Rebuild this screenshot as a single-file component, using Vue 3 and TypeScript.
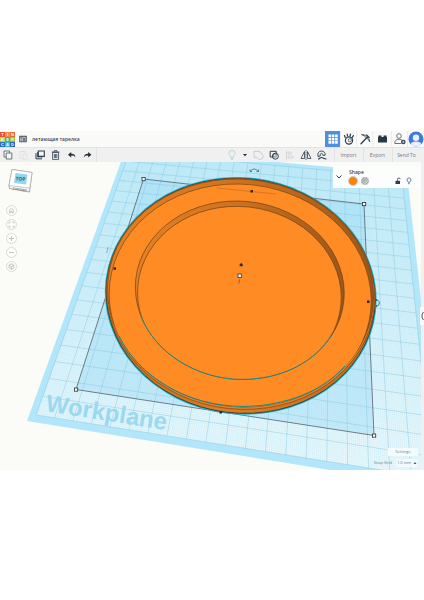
<script setup lang="ts">
import { ref } from 'vue'

type Point = [number, number]

const projectName = ref('летающая тарелка')
const snap = ref('1.0 mm')

const logoTiles = [
  { letter: 'T', color: '#e8503a' },
  { letter: 'I', color: '#f58a3c' },
  { letter: 'N', color: '#ee6a35' },
  { letter: 'K', color: '#c3d83c' },
  { letter: 'E', color: '#4fb848' },
  { letter: 'R', color: '#8dc63f' },
  { letter: 'C', color: '#2a6fbd' },
  { letter: 'A', color: '#3fb2e6' },
  { letter: 'D', color: '#2f62b0' },
]

// Corners of the workplane in scene units: far left, far right, near right, near left
const corners: Point[] = [[126, 148], [407, 174], [442, 488], [27, 421]]

// Projective map from the unit square onto the workplane
function projection(c: Point[]) {
  const [[x0, y0], [x1, y1], [x2, y2], [x3, y3]] = c
  const dx1 = x1 - x2, dx2 = x3 - x2, dx3 = x0 - x1 + x2 - x3
  const dy1 = y1 - y2, dy2 = y3 - y2, dy3 = y0 - y1 + y2 - y3
  const det = dx1 * dy2 - dx2 * dy1
  const g = (dx3 * dy2 - dx2 * dy3) / det
  const h = (dx1 * dy3 - dx3 * dy1) / det
  return (u: number, v: number): Point => {
    const w = g * u + h * v + 1
    return [
      ((x1 - x0 + g * x1) * u + (x3 - x0 + h * x3) * v + x0) / w,
      ((y1 - y0 + g * y1) * u + (y3 - y0 + h * y3) * v + y0) / w,
    ]
  }
}

const project = projection(corners)
const margin = 0.018
const at = (u: number, v: number) =>
  project(margin + u * (1 - 2 * margin), margin + v * (1 - 2 * margin))
    .map((n) => n.toFixed(1))
    .join(' ')

function gridPath(count: number) {
  let d = ''
  for (let i = 0; i <= count; i++) {
    const t = i / count
    d += `M${at(t, 0)}L${at(t, 1)}M${at(0, t)}L${at(1, t)}`
  }
  return d
}

const outerPlane = corners.map((p) => p.join(',')).join(' ')
const innerPlane = `M${at(0, 0)}L${at(1, 0)}L${at(1, 1)}L${at(0, 1)}Z`
const coarseGrid = gridPath(20)
const fineGrid = gridPath(200)
const handles: Point[] = [[143.5, 179], [364, 204], [374, 435.5], [76, 389.5]]
const footprint = handles.map((p) => p.join(',')).join(' ')
</script>

<template>
  <main class="app">
    <header class="topbar">
      <a class="logo" href="#" aria-label="Tinkercad">
        <span v-for="t in logoTiles" :key="t.letter" class="tile" :style="{ background: t.color }">{{ t.letter }}</span>
      </a>
      <button class="cell list" aria-label="Designs">
        <svg viewBox="0 0 16 16"><rect x="1.5" y="2.5" width="13" height="11" fill="#fff" stroke="#444c55" stroke-width="2" /><path d="M2 4h12M6 4v9M8 7h5M8 9h5M8 11h5M3 7h2M3 10h2" stroke="#444c55" stroke-width="1.5" /></svg>
      </button>
      <h1 class="title">{{ projectName }}</h1>
      <nav class="modes">
        <button class="cell active" aria-label="3D design">
          <svg viewBox="0 0 16 16"><path d="M3.5 3.5h2.6v2.600H3.5zM6.8 3.5h2.6v2.600H6.8zM10.1 3.5h2.6v2.6h-2.6zM3.5 6.8h2.6v2.600H3.5zM6.8 6.8h2.6v2.600H6.8zM10.1 6.8h2.6v2.6h-2.6zM3.5 10.1h2.6v2.600H3.5zM6.8 10.1h2.6v2.600H6.8zM10.1 10.1h2.6v2.6h-2.6z" fill="#fff" /></svg>
        </button>
        <button class="cell" aria-label="Sim lab">
          <svg viewBox="0 0 16 16" fill="none" stroke="#2d3d4b"><circle cx="8" cy="9.500" r="3.600" stroke-width="1.200" /><circle cx="8.800" cy="9.200" r="1.600" stroke-width=".7" /><path d="M4.200 6.500L3.500 4.500M6.500 5L6.200 3M9 5l.5-2M11.200 6.400l1.200-1.800" stroke-width="1.200" stroke-linecap="round" /></svg>
        </button>
        <button class="cell" aria-label="Blocks">
          <svg viewBox="0 0 16 16" fill="none" stroke="#2d3d4b" stroke-linecap="round"><path d="M4 12.800L10.400 6" stroke-width="1.300" /><path d="M5 3.700c3-.4 7 1.800 7.800 7.200c-1-2-2.200-3.300-3.700-4.600C7.700 5 6.500 4.300 5 3.700z" stroke-width=".8" /><path d="M9.500 3.800l2.700 2.700" stroke-width="1.200" /></svg>
        </button>
        <button class="cell wide" aria-label="Bricks">
          <svg viewBox="0 0 16 16" fill="#263746"><path d="M4 6V4.500h3V6h2V4.500h3V6h.5v5.500h-9V6z" /></svg>
        </button>
        <button class="cell" aria-label="Invite people">
          <svg viewBox="0 0 16 16" fill="none" stroke="#5d6871" stroke-width=".9"><circle cx="7" cy="5" r="2.300" /><path d="M9 12.500H2.800c0-3 1.500-4.300 4.200-4.300c1.500 0 2.500.4 3.200 1.200" /><circle cx="11.300" cy="11" r="2.300" fill="#2d3d4b" stroke="none" /><path d="M11.300 9.700v2.600M10 11h2.600" stroke="#fff" stroke-width=".6" /></svg>
        </button>
        <button class="cell avatar" aria-label="Account">
          <svg viewBox="0 0 16 16"><circle cx="8" cy="8" r="7.500" fill="#3d7cdc" /><path d="M2.600 13.200c1-2.200 2.500-2.800 5.400-2.800s4.400.6 5.400 2.800A7.500 7.500 0 0 1 2.600 13.200z" fill="#e8f0fb" /><circle cx="8" cy="6.800" r="3.200" fill="#e8f0fb" /></svg>
        </button>
      </nav>
    </header>

    <div class="toolbar" role="toolbar" aria-label="Edit">
      <div class="tools left">
        <button class="cell" aria-label="Copy">
          <svg viewBox="0 0 16 16" fill="#f5f5f5" stroke="#4b5864" stroke-width=".8"><path d="M4 4h5.500v6H4z" /><path d="M6.200 6h5.600v6H6.200z" /></svg>
        </button>
        <button class="cell" aria-label="Paste" disabled>
          <svg viewBox="0 0 16 16" fill="none" stroke="#dcdfe1" stroke-width=".9"><path d="M6.500 11.500H3.800V4.500h5.400V7M5.400 4.300h2.200" /><path d="M7 7.200h4v5H7z" /></svg>
        </button>
        <button class="cell" aria-label="Duplicate">
          <svg viewBox="0 0 16 16" fill="#f5f5f5" stroke="#2d3d4b"><path d="M6.300 4h6v5.400h-6z" stroke-width="1.100" /><path d="M4 6.200v5.600h6" fill="none" stroke-width="1" /><path d="M5.500 5v5h5" fill="none" stroke-width=".8" /></svg>
        </button>
        <button class="cell" aria-label="Delete">
          <svg viewBox="0 0 16 16" fill="none" stroke="#2d3d4b" stroke-width=".8"><path d="M4.600 5.400h6v7h-6zM3.800 5h7.600M6.300 4.800V3.600h2.600v1.200M6.400 7v4M7.600 7v4M8.800 7v4" /></svg>
        </button>
        <button class="cell" aria-label="Undo">
          <svg viewBox="0 0 16 16"><path d="M7.200 5L4 7.800l3.200 2.700V8.600c2.500-.2 3.400.4 4 2c.4-2.400-1-3.900-4-3.900z" fill="#1f2c38" /></svg>
        </button>
        <button class="cell" aria-label="Redo">
          <svg viewBox="0 0 16 16"><path d="M8.200 5l3.200 2.800l-3.200 2.700V8.600c-2.500-.2-3.400.4-4 2c-.4-2.400 1-3.900 4-3.900z" fill="#1f2c38" /></svg>
        </button>
      </div>
      <div class="tools right">
        <button class="cell" aria-label="Show all">
          <svg viewBox="0 0 16 16" fill="none" stroke="#b4cdd2" stroke-width=".8"><path d="M6.500 10.200c0-1.500-1.500-2-1.500-3.900a3 3 0 0 1 6 0c0 1.900-1.500 2.400-1.500 3.900zM6.700 11.500h2.600M7.200 12.600h1.600" /></svg>
        </button>
        <button class="cell caret" aria-label="Visibility options">
          <svg viewBox="0 0 10 16"><path d="M3 7h4L5 9.200z" fill="#1f2c38" /></svg>
        </button>
        <button class="cell" aria-label="Group" disabled>
          <svg viewBox="0 0 16 16" fill="none" stroke="#c6cacd" stroke-width=".9"><path d="M4 4.400h6V6a3.200 3.200 0 1 1-3 4.400H4z" /></svg>
        </button>
        <button class="cell" aria-label="Ungroup">
          <svg viewBox="0 0 16 16" fill="none" stroke="#2d3d4b" stroke-width="1"><path d="M7 10H4.200V4.300h6v2" /><circle cx="9.400" cy="9.200" r="3" /><path d="M7.400 7.200h2.800v2.800H7.400z" stroke-width=".6" /></svg>
        </button>
        <button class="cell" aria-label="Align" disabled>
          <svg viewBox="0 0 16 16" fill="none" stroke="#cfd3d5" stroke-width=".9"><path d="M4.500 3.500v9M6 5h3v2H6zM6 9h5v2H6z" /></svg>
        </button>
        <button class="cell" aria-label="Mirror">
          <svg viewBox="0 0 16 16" fill="none" stroke="#2d3d4b" stroke-width=".8"><path d="M6.500 4.500v7H3zM9.500 4.500v7H13z" /><path d="M8 3v10" stroke-dasharray="1.500 .6" /></svg>
        </button>
        <button class="cell" aria-label="Cruise">
          <svg viewBox="0 0 16 16" fill="none" stroke="#2d3d4b"><path d="M4 9.500C3.200 6 5 4 7.500 4s4 2 3.600 4.300H8.800c0-1.300-.4-2-1.300-2S5.900 7.500 6.300 9z" stroke-width=".9" /><path d="M4 12c1.500 0 2-1.500 3.500-1.500S9.500 12 12.500 12" stroke-width="1.200" /></svg>
        </button>
        <div class="actions">
          <button class="action">Import</button>
          <button class="action">Export</button>
          <button class="action">Send To</button>
        </div>
      </div>
    </div>

    <section class="viewport">
      <svg class="scene" viewBox="0 162 424 308" role="img" aria-label="Workplane">
        <defs>
          <linearGradient id="rimWall"><stop offset="0" stop-color="#e58024" /><stop offset=".45" stop-color="#cd711f" /><stop offset="1" stop-color="#9c5618" /></linearGradient>
          <linearGradient id="sideWall"><stop offset="0" stop-color="#c06b20" /><stop offset=".5" stop-color="#df7b22" /><stop offset="1" stop-color="#c06c20" /></linearGradient>
          <linearGradient id="planeFill" x2="0" y2="1"><stop offset="0" stop-color="#c8effb" /><stop offset="1" stop-color="#eefafd" /></linearGradient>
          <clipPath id="rimClip"><ellipse cx="240.500" cy="293" rx="133.400" ry="113.800" transform="rotate(6 240.500 293)" /></clipPath>
          <clipPath id="wellClip"><ellipse cx="239.800" cy="290.200" rx="104.600" ry="89" transform="rotate(6 239.800 290.200)" /></clipPath>
        </defs>
        <polygon :points="outerPlane" fill="#b2e6fa" />
        <path :d="innerPlane" fill="url(#planeFill)" />
        <polygon :points="footprint" fill="#9bdcf8" fill-opacity=".42" />
        <path :d="fineGrid" fill="none" stroke="#96d3e8" stroke-width=".35" stroke-opacity=".42" />
        <path :d="coarseGrid" fill="none" stroke="#80c2da" stroke-width=".6" stroke-opacity=".65" />
        <polygon :points="footprint" fill="none" stroke="#444f56" stroke-width=".7" />
        <text x="45" y="411" class="plane-label" transform="rotate(9 45 411)">Workplane</text>

        <g fill="none" stroke-width=".7">
          <ellipse cx="240.700" cy="295.800" rx="135.300" ry="117.800" transform="rotate(7 240.700 295.800)" fill="url(#sideWall)" stroke="#16b4d2" stroke-width="1.600" />
          <ellipse cx="240.700" cy="295.800" rx="134.800" ry="117.300" transform="rotate(7 240.700 295.800)" stroke="#3f3a2b" stroke-width=".9" />
          <ellipse cx="240.600" cy="294" rx="134.300" ry="115.200" transform="rotate(6 240.600 294)" fill="#e88026" stroke="#7a4a1c" />
          <ellipse cx="240.500" cy="293" rx="133.200" ry="113.800" transform="rotate(6 240.500 293)" fill="url(#rimWall)" stroke="#6f441c" />
          <g clip-path="url(#rimClip)">
            <ellipse cx="240.200" cy="297.500" rx="131.200" ry="113.300" transform="rotate(6 240.200 297.500)" fill="#ff8b25" stroke="#7a4819" />
          </g>
          <path d="M119 336C139 377 187 406 243 406.500C286 406 323 391 345 366" stroke="#168a8a" stroke-width="1" />
          <ellipse cx="239.800" cy="290.200" rx="104.600" ry="89" transform="rotate(6 239.800 290.200)" fill="url(#rimWall)" stroke="#6f441c" />
          <g clip-path="url(#wellClip)">
            <ellipse cx="239.400" cy="295" rx="102" ry="88.500" transform="rotate(6 239.400 295)" fill="#ff8b25" stroke="#6f441c" />
          </g>
          <path d="M141 316C155 353 197 379 241 379.400C281 379.500 315 363 332 334" stroke="#168a8a" stroke-width="1" />
          <path d="M217 188l59 6" stroke="#9d5a20" stroke-width=".4" />
        </g>

        <g fill="#33271d">
          <rect x="250.500" y="190" width="2.500" height="2.500" />
          <rect x="113.500" y="267.300" width="2.500" height="2.500" />
          <rect x="367" y="300.500" width="2.500" height="2.500" />
          <rect x="219.500" y="411" width="2.500" height="2.500" />
          <path d="M239.500 265.300c0-1.200 1-1.300 1.700-2.300c.7 1 1.700 1.100 1.700 2.300c0 1.600-3.400 1.600-3.400 0z" />
        </g>
        <g fill="#fff" stroke="#3b4247" stroke-width=".9">
          <rect v-for="h in handles" :key="h[0]" :x="h[0] - 1.5" :y="h[1] - 1.5" width="3.200" height="3.200" />
          <rect x="238" y="274" width="3.400" height="3.400" />
        </g>
        <g fill="none" stroke="#3f4a52" stroke-width=".8">
          <path d="M239.500 279.500l-.7 4" stroke="#7d481b" />
          <path d="M250 171.500q4-5 8.500 0M250 169.500v2h2M258.500 169.500v2h-2" stroke-opacity=".8" />
          <path d="M377 300c3 .5 3 5.500 0 6M376.500 299v2M376.500 307v-2" />
          <path d="M108.500 247c-1 1-1 4-2 6" stroke-opacity=".5" />
        </g>
      </svg>

      <button class="cube" aria-label="View cube, top">
        <svg viewBox="0 0 26 28"><path d="M5 1.500L25 4.500L22.500 24L2.500 20.500L2 17.500z" fill="#f7f7f5" stroke="#8d9093" stroke-width=".8" /><path d="M5 1.500L25 4.500L22.800 20L2 17.500z" fill="#fff" stroke="#a7aaac" stroke-width=".6" /><path d="M8.500 5L20.500 6.500L19 16.500L7 15z" fill="#8fd7f5" /><text x="8.500" y="12.500" class="cube-top" transform="rotate(4 13 11)">TOP</text><text x="5.500" y="21.500" class="cube-side" transform="rotate(7 5 21)">СПЕРЕДИ</text></svg>
      </button>

      <div class="camera">
        <button aria-label="Home view"><svg viewBox="0 0 11 11"><path d="M3 5.600L5.500 3.200L8 5.600M3.700 5.300v2.500h1.200V6.200h1.200v1.600h1.200V5.300" /></svg></button>
        <button aria-label="Fit view"><svg viewBox="0 0 11 11"><path d="M3 4.500V3h1.500M6.500 3H8v1.500M8 6.500V8H6.500M4.500 8H3V6.500" /></svg></button>
        <button aria-label="Zoom in"><svg viewBox="0 0 11 11"><path d="M3 5.500h5M5.500 3v5" /></svg></button>
        <button aria-label="Zoom out"><svg viewBox="0 0 11 11"><path d="M3 5.500h5" /></svg></button>
        <button aria-label="Perspective"><svg viewBox="0 0 11 11"><path d="M5.500 2.800L8 4.200v2.700L5.500 8.300L3 6.900V4.200zM3 4.200l2.500 1.400L8 4.200M5.500 5.600v2.600" /></svg></button>
      </div>

      <aside class="inspector">
        <button class="collapse" aria-label="Collapse"><svg viewBox="0 0 8 8"><path d="M1.500 2.500L4 5l2.500-2.500" fill="none" stroke="#2d3d4b" stroke-width="1" /></svg></button>
        <div class="shape">
          <h2>Shape</h2>
          <div class="swatches">
            <button class="swatch solid" aria-label="Solid"></button>
            <button class="swatch hole" aria-label="Hole"></button>
          </div>
        </div>
        <div class="flags">
          <button aria-label="Lock"><svg viewBox="0 0 8 8"><path d="M1.500 3.800h4.500V7H1.500z" fill="#2d3d4b" /><path d="M3.500 3.800V2.300a1.300 1.300 0 0 1 2.600 0" fill="none" stroke="#2d3d4b" stroke-width=".8" /></svg></button>
          <button aria-label="Hide"><svg viewBox="0 0 8 8" fill="none" stroke="#54738a" stroke-width=".9"><path d="M3.200 5.300C3.200 4.400 2 4.200 2 2.900a2 2 0 0 1 4 0c0 1.300-1.200 1.500-1.200 2.400zM3.200 6.700h1.600" /></svg></button>
        </div>
      </aside>

      <div class="footer">
        <button class="settings">Settings</button>
        <div class="snap">
          <label for="snap">Snap Grid</label>
          <span class="picker">
            <select id="snap" v-model="snap"><option>1.0 mm</option><option>0.5 mm</option></select>
            <svg viewBox="0 0 4 4" aria-hidden="true"><path d="M.5 3h3L2 1z" fill="#55626c" /></svg>
          </span>
        </div>
      </div>
      <div class="edge"><button aria-label="Open shapes panel"><svg viewBox="0 0 4 18"><path d="M3.500 5Q.3 9 3.500 13" fill="none" stroke="#3e4a54" stroke-width=".9" /></svg></button></div>
    </section>
  </main>
</template>

<style>
body {
  margin: 0;
  background: #fff;
}
</style>

<style scoped>
.app {
  padding: 131px 0;
  font-family: 'Open Sans', 'Noto Sans', sans-serif;
  color: #3c4650;
}
button {
  margin: 0;
  padding: 0;
  border: 0;
  background: none;
  font: inherit;
  color: inherit;
}
svg {
  display: block;
}
h1,
h2 {
  margin: 0;
}
.topbar {
  display: flex;
  align-items: center;
  height: 16px;
  background: #fafaf9;
  border-bottom: 1px solid #e3e3e3;
}
.logo {
  display: grid;
  grid-template-columns: repeat(3, 5px);
  grid-auto-rows: 5px;
  text-decoration: none;
}
.tile {
  font: bold 4px/5px 'Liberation Sans', sans-serif;
  text-align: center;
  color: #fff;
}
.cell {
  flex: none;
  width: 16px;
  height: 16px;
}
.cell svg {
  width: 100%;
  height: 100%;
}
.list {
  width: 8px;
  height: 8px;
  margin: 0 5px 0 4px;
}
.title {
  font-size: 5px;
  line-height: 8px;
  font-weight: 600;
}
.modes {
  display: flex;
  margin-left: auto;
}
.modes .cell + .cell {
  box-shadow: -1px 0 #ececec;
}
.modes .cell.active {
  background: #4f8fdf;
}
.modes .wide {
  width: 19px;
}
.toolbar {
  display: flex;
  justify-content: space-between;
  height: 14px;
  padding-right: 3px;
  background: #f0f0f0;
}
.tools {
  display: flex;
  align-items: center;
}
.left {
  border-right: 1px solid #e4e4e4;
}
.cell.caret {
  width: 10px;
}
.actions {
  display: flex;
  margin-left: 4px;
}
.action {
  width: 29px;
  height: 14px;
  padding-right: 1px;
  border-left: 1px solid #e2e2e2;
  font-size: 5px;
  line-height: 14px;
  color: #717982;
}
.viewport {
  position: relative;
  background: #fbfbf7;
}
.scene {
  width: 100%;
  height: auto;
}
.plane-label {
  font: bold 24px 'Liberation Sans', sans-serif;
  fill: #9bd9f0;
}
.cube {
  position: absolute;
  top: 6px;
  left: 7px;
  width: 26px;
  height: 28px;
}
.cube-top {
  font: bold 5px 'Open Sans', sans-serif;
  fill: #34617c;
}
.cube-side {
  font: bold 3px 'Open Sans', sans-serif;
  fill: #777;
}
.camera {
  position: absolute;
  top: 43px;
  left: 6px;
  display: grid;
  gap: 3px;
}
.camera button {
  width: 11px;
  height: 11px;
  border: 1px solid #dbdbd7;
  border-radius: 50%;
  background: #fdfdfb;
}
.camera svg {
  margin: -1px;
  width: 11px;
  height: 11px;
  fill: none;
  stroke: #c4c6c4;
  stroke-width: 1px;
}
.inspector {
  position: absolute;
  top: 4px;
  right: 3px;
  box-sizing: border-box;
  width: 88px;
  height: 22px;
  display: flex;
  align-items: center;
  padding: 0 8px 0 2px;
  background: #fcfdfd;
}
.collapse {
  width: 8px;
  height: 8px;
}
.shape {
  margin-left: 5px;
}
.shape h2 {
  margin-left: 1px;
  font-size: 5px;
  line-height: 8px;
  font-weight: 600;
}
.swatches {
  display: flex;
  align-items: center;
  gap: 3px;
}
.swatch {
  box-sizing: border-box;
  width: 8px;
  height: 8px;
  border-radius: 50%;
}
.solid {
  width: 10px;
  height: 10px;
  border: 1px solid #c9cdd0;
  background: #ff8207;
}
.hole {
  background: repeating-linear-gradient(135deg, #a9adb0 0 1px, #c6c9cb 1px 2px);
}
.flags {
  display: flex;
  gap: 3px;
  margin: 7px 0 0 auto;
}
.flags button {
  width: 8px;
  height: 8px;
}
.footer {
  position: absolute;
  right: 6px;
  bottom: 3px;
  display: flex;
  flex-direction: column;
  align-items: flex-end;
  gap: 3px;
  font-size: 4px;
  line-height: 8px;
  color: #6f7d87;
}
.settings {
  width: 30px;
  background: #f4fbfd;
}
.snap {
  display: flex;
  align-items: center;
  gap: 4px;
}
.picker {
  display: flex;
  align-items: center;
  padding-right: 1px;
  background: #f0f9fc;
}
.picker svg {
  width: 4px;
  height: 4px;
}
.picker select {
  appearance: none;
  width: 17px;
  height: 8px;
  padding: 0 0 0 1px;
  border: 0;
  background: none;
  font: inherit;
  color: #6f7d87;
}
.edge {
  position: absolute;
  top: 0;
  right: 0;
  bottom: 0;
  display: flex;
  align-items: center;
  width: 3px;
  background: #f0f0f0;
}
.edge button {
  flex: none;
  width: 4px;
  height: 18px;
  margin-left: -1px;
  background: #fafafa;
}
</style>
